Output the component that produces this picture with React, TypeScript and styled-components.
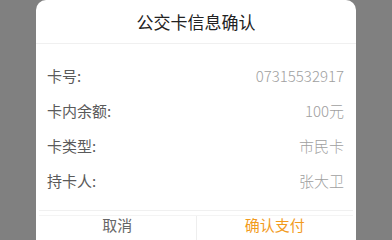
import styled, { createGlobalStyle } from "styled-components";

const GlobalStyle = createGlobalStyle`
html, body {
  margin: 0;
  padding: 0;
  height: 100%;
  overflow: hidden;
  background-color: #808080;
}
#root {
  height: 100%;
}
`;

const Background = styled.div`
height: 100vh;
width: 100vw;
overflow: hidden;
display: flex;
justify-content: center;
align-items: flex-start;
font-family: "Noto Sans CJK SC", "Noto Sans", sans-serif;
`;

const Window = styled.div`
background-color: white;
width: 320px;
border-radius: 10px;
display: flex;
flex-direction: column;
`;

const Title = styled.div`
height: 43px;
border-bottom: 1px solid #f0f0f0;
display: flex;
justify-content: center;
align-items: center;
font-size: 17px;
color: #222;
`;

const Body = styled.div`
padding: 14px 12px 12px 11px;
display: flex;
flex-direction: column;
`;

const Row = styled.div`
height: 35px;
display: flex;
justify-content: space-between;
align-items: center;
font-size: 15px;
`;

const Label = styled.span`
color: #5a5a5a;
`;

const Value = styled.span`
color: #a0a0a0;
font-weight: 300;
`;

const Footer = styled.div`
margin: 0 3px;
border-top: 1px solid #f0f0f0;
padding-top: 4px;
`;

const Buttons = styled.div`
border-top: 1px solid #f4f4f4;
display: flex;
height: 40px;
`;

const Button = styled.div<{ $primary?: boolean }>`
flex: 1;
display: flex;
justify-content: center;
align-items: flex-start;
padding-top: 1px;
font-size: 15px;
line-height: 16px;
color: ${(p) => (p.$primary ? "#f29b1d" : "#666")};
& + & {
  border-left: 1px solid #eee;
}
`;

const rows = [
  { label: "卡号:", value: "07315532917" },
  { label: "卡内余额:", value: "100元" },
  { label: "卡类型:", value: "市民卡" },
  { label: "持卡人:", value: "张大卫" },
];

export default function App() {
  return (
    <>
      <GlobalStyle />
      <Background>
        <Window>
          <Title>公交卡信息确认</Title>
          <Body>
            {rows.map((r) => (
              <Row key={r.label}>
                <Label>{r.label}</Label>
                <Value>{r.value}</Value>
              </Row>
            ))}
          </Body>
          <Footer>
            <Buttons>
              <Button>取消</Button>
              <Button $primary>确认支付</Button>
            </Buttons>
          </Footer>
        </Window>
      </Background>
    </>
  );
}
